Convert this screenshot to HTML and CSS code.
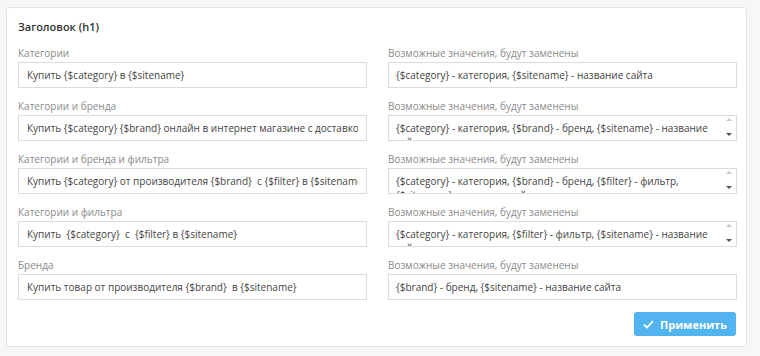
FILE: index.html
```html
<!DOCTYPE html>
<html>
<head>
    <title>Заголовок (h1)</title>
    <link rel="stylesheet" href="styles.css">
</head>
<body>
    <div class="card">
        <h3 class="card-title">Заголовок (h1)</h3>

        <div class="grid">
            <div class="form-group">
                <label>Категории</label>
                <input type="text" value="Купить {$category} в {$sitename}">
            </div>
            <div class="form-group">
                <label>Возможные значения, будут заменены</label>
                <input type="text" class="hint" value="{$category} - категория, {$sitename} - название сайта" readonly>
            </div>

            <div class="form-group">
                <label>Категории и бренда</label>
                <input type="text" value="Купить {$category} {$brand} онлайн в интернет магазине с доставкой по всей стране">
            </div>
            <div class="form-group">
                <label>Возможные значения, будут заменены</label>
                <div class="area">
                    <div class="area-text">{$category} - категория, {$brand} - бренд, {$sitename} - название сайта</div>
                    <div class="arrows"><span class="up"></span><span class="down"></span></div>
                </div>
            </div>

            <div class="form-group">
                <label>Категории и бренда и фильтра</label>
                <input type="text" value="Купить {$category} от производителя {$brand}  с {$filter} в {$sitename}">
            </div>
            <div class="form-group">
                <label>Возможные значения, будут заменены</label>
                <div class="area">
                    <div class="area-text">{$category} - категория, {$brand} - бренд, {$filter} - фильтр, {$sitename} - название сайта</div>
                    <div class="arrows"><span class="up"></span><span class="down"></span></div>
                </div>
            </div>

            <div class="form-group">
                <label>Категории и фильтра</label>
                <input type="text" value="Купить  {$category}  с  {$filter} в {$sitename}">
            </div>
            <div class="form-group">
                <label>Возможные значения, будут заменены</label>
                <div class="area">
                    <div class="area-text">{$category} - категория, {$filter} - фильтр, {$sitename} - название сайта</div>
                    <div class="arrows"><span class="up"></span><span class="down"></span></div>
                </div>
            </div>

            <div class="form-group">
                <label>Бренда</label>
                <input type="text" value="Купить товар от производителя {$brand}  в {$sitename}">
            </div>
            <div class="form-group">
                <label>Возможные значения, будут заменены</label>
                <input type="text" class="hint" value="{$brand} - бренд, {$sitename} - название сайта" readonly>
            </div>
        </div>

        <div class="actions">
            <button type="button" class="btn">
                <svg width="11" height="9" viewBox="0 0 11 9"><path d="M1 4.6 L4 7.5 L10 1.2" fill="none" stroke="#fff" stroke-width="1.8"/></svg>
                Применить
            </button>
        </div>
    </div>
</body>
</html>
```

FILE: styles.css
```css
body {
    margin: 0;
    background-color: #f7f7f7;
    font-family: "Open Sans", "Liberation Sans", sans-serif;
    font-size: 10px;
    color: #555;
}
.card {
    width: 719px;
    height: 325px;
    margin: 7px 0 0 6px;
    padding: 11px 10px 2px 10px;
    background-color: #fff;
    border: 1px solid #e6e6e6;
    border-radius: 3px;
}
.card-title {
    margin: 0 0 11px 1px;
    font-size: 11px;
    line-height: 16px;
    font-weight: 600;
    color: #333;
}
.grid {
    display: grid;
    grid-template-columns: 349px 349px;
    column-gap: 21px;
    row-gap: 11px;
    padding-left: 1px;
}
label {
    display: block;
    margin-bottom: 2px;
    line-height: 14px;
    color: #8a8a8a;
}
input,
.area {
    display: block;
    box-sizing: border-box;
    width: 100%;
    height: 26px;
    margin: 0;
    padding: 0 8px;
    border: 1px solid #dcdcdc;
    border-radius: 0;
    background-color: #fff;
    font-family: "Open Sans", "Liberation Sans", sans-serif;
    font-size: 10px;
    color: #444;
    outline: none;
}
.hint {
    padding-left: 7px;
}
.area {
    display: flex;
    padding: 5px 2px 0 7px;
    overflow: hidden;
}
.area-text {
    flex: 1;
    padding-right: 14px;
    line-height: 14px;
}
.arrows {
    display: flex;
    flex-direction: column;
    justify-content: space-between;
    width: 10px;
    height: 18px;
    margin-top: -3px;
}
.arrows span {
    width: 0;
    height: 0;
    margin: 0 auto;
    border-left: 3px solid transparent;
    border-right: 3px solid transparent;
}
.arrows .up {
    border-bottom: 3px solid #c8c8c8;
}
.arrows .down {
    border-top: 3px solid #555;
}
.actions {
    display: flex;
    justify-content: flex-end;
    margin-top: 12px;
}
.btn {
    display: flex;
    align-items: center;
    gap: 6px;
    height: 24px;
    width: 102px;
    justify-content: center;
    background-color: #52b4ef;
    color: #fff;
    border: none;
    border-radius: 3px;
    font-family: "Open Sans", "Liberation Sans", sans-serif;
    font-size: 11px;
    font-weight: 700;
    cursor: pointer;
}
```
